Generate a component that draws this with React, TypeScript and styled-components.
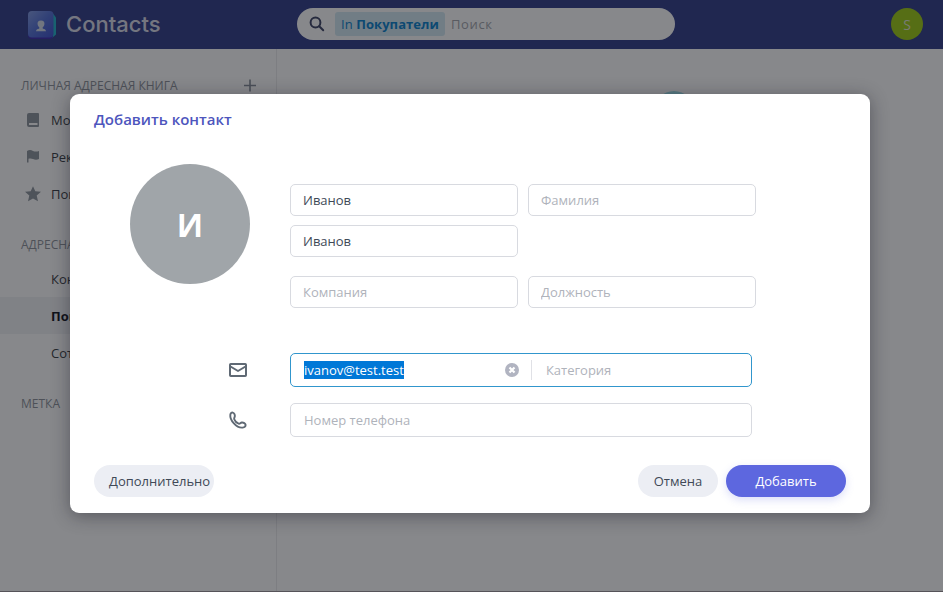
import React from "react";
import styled, { createGlobalStyle, css } from "styled-components";

const GlobalStyle = createGlobalStyle`
  * { box-sizing: border-box; }
  body {
    margin: 0;
    font: 13px/18px "Open Sans", "Noto Sans", sans-serif;
    color: #404957;
    overflow: hidden;
  }
  button, input { font: inherit; color: inherit; }
`;

const Page = styled.div`
  position: relative;
  display: flex;
  flex-direction: column;
  width: 943px;
  height: 592px;
  background: #fff;
  overflow: hidden;
`;

const Header = styled.header`
  display: grid;
  grid-template-columns: 269px 378px 1fr;
  align-items: center;
  height: 49px;
  flex: none;
  padding: 0 20px 1px 28px;
  background: #303c88;
`;

const Brand = styled.div`
  display: flex;
  align-items: center;
  gap: 10px;
  color: #fff;
  svg { display: block; margin-top: 2px; }
`;

const BrandName = styled.span`
  font: 500 22px/30px Inter, sans-serif;
  letter-spacing: 0;
  opacity: 0.82;
`;

const Search = styled.div`
  display: flex;
  align-items: center;
  height: 32px;
  border-radius: 16px;
  padding-left: 12px;
  background: #fff;
`;

const Scope = styled.span`
  height: 24px;
  margin: 0 6px 0 10px;
  padding: 0 6px;
  border-radius: 3px;
  background: #d3e8f2;
  color: #0880cc;
  line-height: 24px;
  letter-spacing: 0.06px;
  white-space: nowrap;
  b { font-weight: 700; }
`;

const SearchHint = styled.span`
  color: #a2a5ab;
  letter-spacing: 0.65px;
`;

const UserBadge = styled.div`
  justify-self: end;
  width: 32px;
  height: 32px;
  border-radius: 50%;
  background: #9dca12;
  color: #e0e5d2;
  font-size: 14px;
  line-height: 33px;
  text-align: center;
`;

const Body = styled.div`
  display: flex;
  flex: 1;
  border-bottom: 1px solid #9c959b;
`;

const Sidebar = styled.aside`
  width: 277px;
  border-right: 1px solid #eaebed;
  padding-top: 27px;
`;

const SectionTitle = styled.div<{ $gap?: number }>`
  display: flex;
  align-items: center;
  justify-content: space-between;
  height: 20px;
  margin-top: ${(p) => p.$gap ?? 0}px;
  padding: 0 19px 0 21px;
  color: #8c9199;
  font-size: 12px;
`;

const NavList = styled.nav`
  padding-top: 5px;
`;

const NavItem = styled.div<{ $active?: boolean }>`
  display: grid;
  grid-template-columns: 24px 1fr;
  align-items: center;
  gap: 6px;
  height: 37px;
  padding-left: 21px;
  color: #383c44;
  svg { justify-self: center; display: block; }
  ${(p) => p.$active && css`
    background: #f0f2f5;
    color: #10131c;
    font-weight: 700;
  `}
`;

const Content = styled.main`
  flex: 1;
  display: flex;
  justify-content: center;
  padding: 42px 0 0 127px;
`;

const Illustration = styled.div`
  width: 40px;
  height: 40px;
  border-radius: 50%;
  background: #9ee0ea;
`;

const Overlay = styled.div`
  position: absolute;
  inset: 0;
  padding: 94px 73px 79px 70px;
  background: rgba(16, 18, 23, 0.5);
`;

const Dialog = styled.section`
  display: flex;
  flex-direction: column;
  width: 800px;
  height: 419px;
  padding: 15px 24px 16px;
  border-radius: 9px;
  background: #fff;
  box-shadow: 0 3px 18px rgba(20, 20, 32, 0.42);
`;

const Title = styled.h2`
  margin: 0;
  color: #4e56bd;
  font-size: 15px;
  font-weight: 600;
  line-height: 20px;
`;

const Profile = styled.div`
  display: flex;
  gap: 40px;
  margin: 35px 0 0 36px;
`;

const Avatar = styled.div`
  width: 120px;
  height: 120px;
  border-radius: 50%;
  background: #a0a5a9;
  color: #fff;
  font-size: 32px;
  font-weight: 700;
  line-height: 122px;
  text-align: center;
`;

const Names = styled.div`
  display: grid;
  grid-template-columns: 228px 228px;
  grid-template-rows: 32px 32px 32px;
  column-gap: 10px;
  padding-top: 20px;
  row-gap: 9px;
`;

const fieldFrame = css`
  border: 1px solid #d8dae0;
  border-radius: 5px;
  background: #fff;
  outline: none;
  &::placeholder { color: #afb3bb; opacity: 1; }
`;

const Field = styled.input<{ $lower?: boolean; $first?: boolean }>`
  ${fieldFrame}
  width: 228px;
  height: 32px;
  padding: 0 12px;
  ${(p) => p.$lower && "margin-top: 10px;"}
  ${(p) => p.$first && "grid-column: 1;"}
`;

const ContactRow = styled.div<{ $gap: number }>`
  display: grid;
  grid-template-columns: 20px 462px;
  gap: 42px;
  align-items: center;
  height: 34px;
  margin: ${(p) => p.$gap}px 0 0 134px;
  svg { display: block; }
`;

const EmailBox = styled.div`
  ${fieldFrame}
  display: flex;
  align-items: center;
  height: 34px;
  padding-left: 13px;
  border-color: #3196cd;
`;

const SelectedText = styled.span`
  margin-right: 101px;
  background: #0078d7;
  color: #fff;
`;

const Divider = styled.span`
  width: 1px;
  height: 20px;
  margin: 0 14px 0 12px;
  background: #e0e1e6;
`;

const Placeholder = styled.span`
  color: #afb3bb;
`;

const PhoneField = styled.input`
  ${fieldFrame}
  height: 34px;
  padding: 0 13px;
`;

const Footer = styled.footer`
  display: flex;
  gap: 8px;
  margin-top: auto;
`;

const Button = styled.button<{ $width: number; $primary?: boolean; $start?: boolean }>`
  width: ${(p) => p.$width}px;
  height: 32px;
  padding: ${(p) => (p.$start ? "0 0 0 15px" : "0")};
  margin-right: ${(p) => (p.$start ? "auto" : "0")};
  border: 0;
  border-radius: 16px;
  background: ${(p) => (p.$primary ? "#5d67df" : "#eceef4")};
  color: ${(p) => (p.$primary ? "#fff" : "#404957")};
  text-align: ${(p) => (p.$start ? "left" : "center")};
  white-space: nowrap;
  ${(p) => p.$primary && "box-shadow: 0 3px 8px rgba(93, 103, 223, 0.22);"}
`;

const LogoIcon = () => (
  <svg width="28" height="29" viewBox="0 0 28 29">
    <defs>
      <linearGradient id="cover" x1="0" y1="0" x2="1" y2="1">
        <stop offset="0" stopColor="#829be2" />
        <stop offset=".5" stopColor="#526fd5" />
        <stop offset="1" stopColor="#3d4ecb" />
      </linearGradient>
    </defs>
    <path d="M22 2.500h3l3 4v17l-4 3.500h-2z" fill="#20b3c8" />
    <path d="M0 20h25v5a3 3 0 0 1-3 3H4a4 4 0 0 1-4-4z" fill="#3c2bad" />
    <rect width="25.500" height="26.500" rx="4" fill="url(#cover)" />
    <path d="M13 9.500c-2.500 0-3.800 1.500-3.400 3.800.2 1.400.8 2.300 1.700 3v1.200c-1.600.5-3.200.9-3.300 2.800h10c-.1-1.900-1.700-2.300-3.300-2.800v-1.200c.9-.7 1.500-1.600 1.700-3 .4-2.300-.9-3.800-3.400-3.800z" fill="#d3dbe9" />
  </svg>
);

const SearchIcon = () => (
  <svg width="16" height="16" viewBox="0 0 16 16" fill="none" stroke="#3c4365" strokeWidth="2">
    <circle cx="6.500" cy="6.500" r="4.900" />
    <path d="m10.200 10.200 4 4" strokeLinecap="round" />
  </svg>
);

const PlusIcon = () => (
  <svg width="14" height="14" viewBox="0 0 14 14" stroke="#858c96" strokeWidth="1.6">
    <path d="M7 .5v12M1 6.500h12" />
  </svg>
);

const BookIcon = () => (
  <svg width="12" height="14" viewBox="0 0 12 14">
    <path fillRule="evenodd" d="M2 0h9a1 1 0 0 1 1 1v12a1 1 0 0 1-1 1H2a2 2 0 0 1-2-2V2a2 2 0 0 1 2-2zm0 10v2h8.500v-2z" fill="#8d949c" />
  </svg>
);

const FlagIcon = () => (
  <svg width="14" height="13" viewBox="0 0 14 13">
    <path d="M1 1c2-1.200 4-1.200 6 0 2 .8 4 .7 6 0v8c-2 .9-4 .9-6 0-1.600-.7-3-.7-4.500-.2V12.500H1z" fill="#8d949c" />
  </svg>
);

const StarIcon = () => (
  <svg width="16" height="16" viewBox="0 0 16 16">
    <path d="m8 .3 2.300 4.900 5.700.6-4.300 3.800 1.300 5.700L8 12.400l-5 2.900 1.300-5.700L0 5.800l5.700-.6z" fill="#8d949c" />
  </svg>
);

const MailIcon = () => (
  <svg width="20" height="20" viewBox="0 0 20 20" fill="none" stroke="#5f6974" strokeWidth="2" strokeLinejoin="round">
    <rect x="2" y="4" width="16" height="12" rx="0.800" />
    <path d="m2.500 6.500 7.500 4.500 7.500-4.500" />
  </svg>
);

const PhoneIcon = () => (
  <svg width="20" height="20" viewBox="0 0 20 20" fill="none" stroke="#5f6974" strokeWidth="1.9" strokeLinejoin="round">
    <path d="M2.300 4.800C2.500 3.200 3.600 2.400 4.800 2.600c1.500.3 2.300 2.500 2 4C6.500 7.800 5.800 8 6.300 9.400c.8 2 2.300 3.600 4.300 4.300 1.400.5 1.700-1 3.200-1.200 1.700-.2 3.700 1 3.800 2.400.1 1.500-1.300 2.500-3 2.700-3.100.3-6.300-1.500-8.700-4.200C3.500 10.800 2 7.700 2.300 4.800z" />
  </svg>
);

const ClearIcon = () => (
  <svg width="14" height="14" viewBox="0 0 14 14">
    <circle cx="7" cy="7" r="7" fill="#b1b4c1" />
    <path d="m4.500 4.500 5 5m0-5-5 5" stroke="#fff" strokeWidth="2.200" />
  </svg>
);

export default function App() {
  return (
    <>
      <GlobalStyle />
      <Page>
        <Header>
          <Brand><LogoIcon /><BrandName>Contacts</BrandName></Brand>
          <Search>
            <SearchIcon />
            <Scope>In <b>Покупатели</b></Scope>
            <SearchHint>Поиск</SearchHint>
          </Search>
          <UserBadge>S</UserBadge>
        </Header>
        <Body>
          <Sidebar>
            <SectionTitle>ЛИЧНАЯ АДРЕСНАЯ КНИГА<PlusIcon /></SectionTitle>
            <NavList>
              <NavItem><BookIcon /><span>Мо</span></NavItem>
              <NavItem><FlagIcon /><span>Рек</span></NavItem>
              <NavItem><StarIcon /><span>Пои</span></NavItem>
            </NavList>
            <SectionTitle $gap={23}>АДРЕСНАЯ</SectionTitle>
            <NavList>
              <NavItem><i /><span>Кон</span></NavItem>
              <NavItem $active><i /><span>Покупатели</span></NavItem>
              <NavItem><i /><span>Сот</span></NavItem>
            </NavList>
            <SectionTitle $gap={23}>МЕТКА</SectionTitle>
          </Sidebar>
          <Content><Illustration /></Content>
        </Body>
        <Overlay>
          <Dialog role="dialog" aria-label="Добавить контакт">
            <Title>Добавить контакт</Title>
            <Profile>
              <Avatar>И</Avatar>
              <Names>
                <Field defaultValue="Иванов" />
                <Field placeholder="Фамилия" />
                <Field $first defaultValue="Иванов" />
                <Field $first $lower placeholder="Компания" />
                <Field $lower placeholder="Должность" />
              </Names>
            </Profile>
            <ContactRow $gap={55}>
              <MailIcon />
              <EmailBox>
                <SelectedText>ivanov@test.test</SelectedText>
                <ClearIcon />
                <Divider />
                <Placeholder>Категория</Placeholder>
              </EmailBox>
            </ContactRow>
            <ContactRow $gap={16}>
              <PhoneIcon />
              <PhoneField placeholder="Номер телефона" />
            </ContactRow>
            <Footer>
              <Button $width={120} $start>Дополнительно</Button>
              <Button $width={80}>Отмена</Button>
              <Button $width={120} $primary>Добавить</Button>
            </Footer>
          </Dialog>
        </Overlay>
      </Page>
    </>
  );
}
